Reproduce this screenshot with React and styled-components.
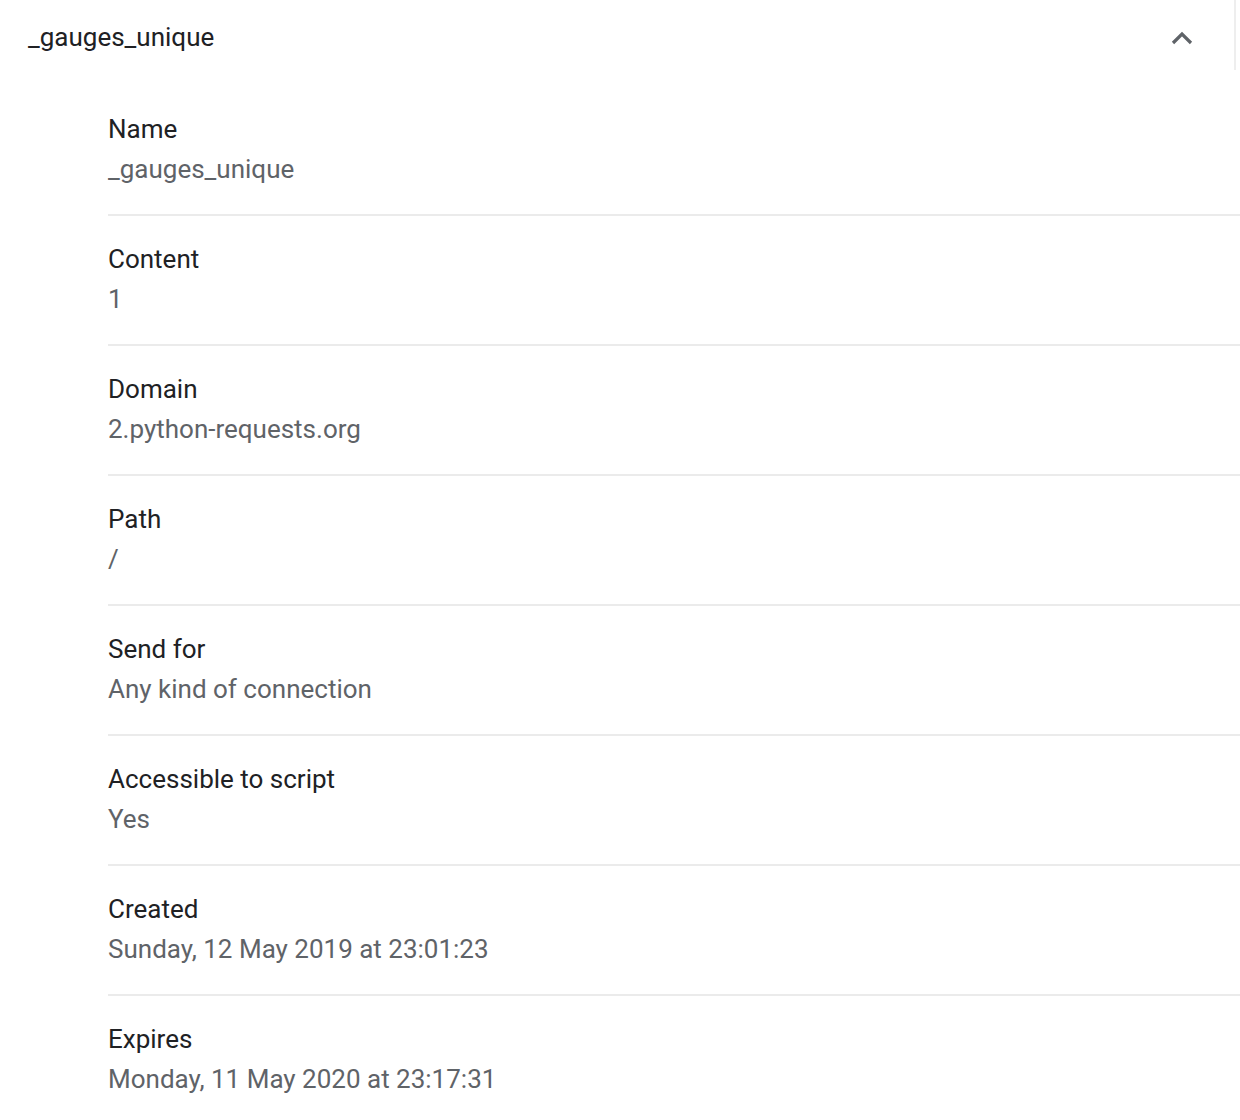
import React from 'react';
import styled, { createGlobalStyle } from 'styled-components';

const GlobalStyle = createGlobalStyle`
  body {
    margin: 0;
    background: #ffffff;
    font-family: Roboto, 'Noto Sans', sans-serif;
  }
`;

const Page = styled.div`
  width: 1240px;
  height: 1120px;
  overflow: hidden;
  background: #ffffff;
`;

const Header = styled.div`
  display: flex;
  align-items: center;
  height: 74px;
  padding-left: 28px;
  color: #202124;
  font-size: 26px;
`;

const Title = styled.div`
  flex: 1;
  line-height: 40px;
`;

const ExpandButton = styled.div`
  width: 50px;
  height: 50px;
  display: flex;
  align-items: center;
  justify-content: center;
  margin-right: 27px;
`;

const Separator = styled.div`
  align-self: flex-start;
  width: 2px;
  height: 70px;
  background: #eeeeee;
  margin-right: 4px;
`;

const Details = styled.div`
  margin-left: 108px;
  padding-top: 10px;
`;

const Row = styled.div`
  padding: 23px 0 25px;
  border-top: 2px solid ${(p) => (p.first ? 'transparent' : '#ebebeb')};
`;

const Label = styled.div`
  color: #202124;
  font-size: 26px;
  line-height: 40px;
`;

const Value = styled.div`
  color: #5f6368;
  font-size: 26px;
  line-height: 40px;
`;

const fields = [
  ['Name', '_gauges_unique'],
  ['Content', '1'],
  ['Domain', '2.python-requests.org'],
  ['Path', '/'],
  ['Send for', 'Any kind of connection'],
  ['Accessible to script', 'Yes'],
  ['Created', 'Sunday, 12 May 2019 at 23:01:23'],
  ['Expires', 'Monday, 11 May 2020 at 23:17:31'],
];

function ChevronUp() {
  return (
    <svg width="24" height="24" viewBox="0 0 24 24">
      <path d="M3 18 L12 9 L21 18" fill="none" stroke="#5f6368" strokeWidth="3.2" />
    </svg>
  );
}

export default function App() {
  return (
    <Page>
      <GlobalStyle />
      <Header>
        <Title>_gauges_unique</Title>
        <ExpandButton>
          <ChevronUp />
        </ExpandButton>
        <Separator />
      </Header>
      <Details>
        {fields.map(([label, value], i) => (
          <Row key={label} first={i === 0}>
            <Label>{label}</Label>
            <Value>{value}</Value>
          </Row>
        ))}
      </Details>
    </Page>
  );
}
